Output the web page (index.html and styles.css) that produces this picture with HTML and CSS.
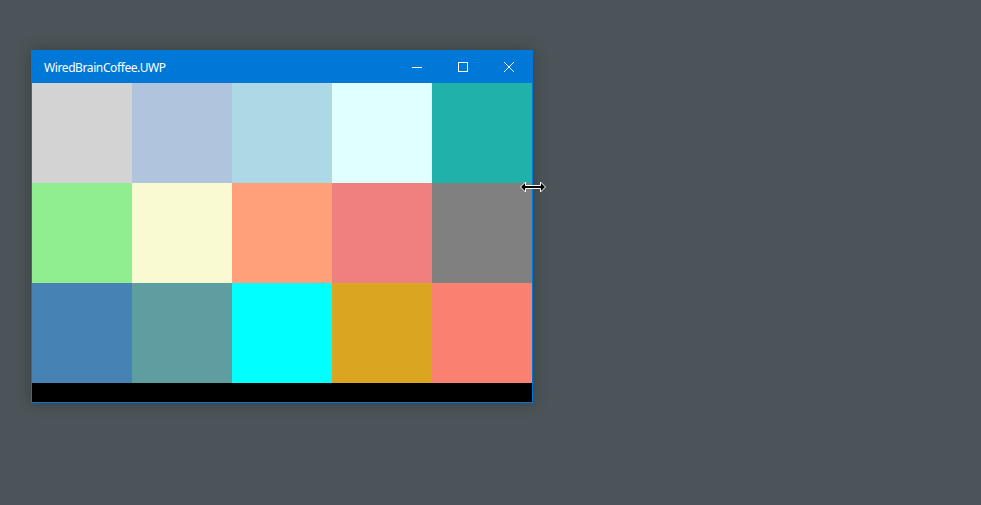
FILE: index.html
```html
<!DOCTYPE html>
<html>
<head>
<meta charset="utf-8">
<link rel="stylesheet" href="styles.css">
</head>
<body>
<div class="desktop">
  <div class="window">
    <div class="titlebar">
      <span class="title">WiredBrainCoffee.UWP</span>
      <div class="controls">
        <div class="btn"><svg width="46" height="32" viewBox="0 0 46 32"><line x1="17" y1="16.5" x2="27" y2="16.5" stroke="#fff" stroke-width="1"/></svg></div>
        <div class="btn"><svg width="46" height="32" viewBox="0 0 46 32"><rect x="17.5" y="11.5" width="9" height="9" fill="none" stroke="#fff" stroke-width="1"/></svg></div>
        <div class="btn"><svg width="46" height="32" viewBox="0 0 46 32"><path d="M17 11 L27 21 M27 11 L17 21" stroke="#fff" stroke-width="1"/></svg></div>
      </div>
    </div>
    <div class="grid">
      <div class="cell" style="background:#d3d3d3"></div>
      <div class="cell" style="background:#b0c4de"></div>
      <div class="cell" style="background:#add8e6"></div>
      <div class="cell" style="background:#e0ffff"></div>
      <div class="cell" style="background:#20b2aa"></div>
      <div class="cell" style="background:#90ee90"></div>
      <div class="cell" style="background:#fafad2"></div>
      <div class="cell" style="background:#ffa07a"></div>
      <div class="cell" style="background:#f08080"></div>
      <div class="cell" style="background:#808080"></div>
      <div class="cell" style="background:#4682b4"></div>
      <div class="cell" style="background:#5f9ea0"></div>
      <div class="cell" style="background:#00ffff"></div>
      <div class="cell" style="background:#daa520"></div>
      <div class="cell" style="background:#fa8072"></div>
    </div>
    <div class="footer"></div>
    <svg class="cursor" width="26" height="12" viewBox="0 0 26 12">
      <path d="M0.5 6 L5.5 1 L5.5 4.5 L20.5 4.5 L20.5 1 L25.5 6 L20.5 11 L20.5 7.5 L5.5 7.5 L5.5 11 Z" fill="#000" stroke="#fff" stroke-width="1"/>
      <path d="M2 6 L5 3 L5 5 L21 5 L21 3 L24 6 L21 9 L21 7 L5 7 L5 9 Z" fill="#000"/>
    </svg>
  </div>
</div>
</body>
</html>
```
FILE: styles.css
```css
html, body {
  margin: 0;
  padding: 0;
  background: #4b5559;
  width: 981px;
  height: 505px;
  overflow: hidden;
}
.desktop {
  padding: 50px 0 0 31px;
}
.window {
  position: relative;
  width: 500px;
  border: 1px solid #0078d7;
  border-top: none;
  box-shadow: 0 0 14px rgba(0, 0, 0, 0.28);
  background: #000;
}
.titlebar {
  height: 33px;
  margin: 0 -1px;
  background: #0078d7;
  display: flex;
  align-items: center;
  justify-content: space-between;
}
.title {
  color: #fff;
  font-family: "Noto Sans", "Open Sans", sans-serif;
  font-size: 12px;
  letter-spacing: -0.4px;
  padding-left: 13px;
  padding-top: 1px;
}
.controls {
  display: flex;
  height: 33px;
}
.btn {
  width: 46px;
  height: 33px;
  display: flex;
  align-items: flex-start;
}
.btn svg {
  display: block;
  margin-top: 1px;
}
.grid {
  display: grid;
  grid-template-columns: repeat(5, 100px);
  grid-auto-rows: 100px;
}
.footer {
  height: 19px;
  background: #000;
}
.cursor {
  position: absolute;
  left: 488px;
  top: 131px;
}
```
